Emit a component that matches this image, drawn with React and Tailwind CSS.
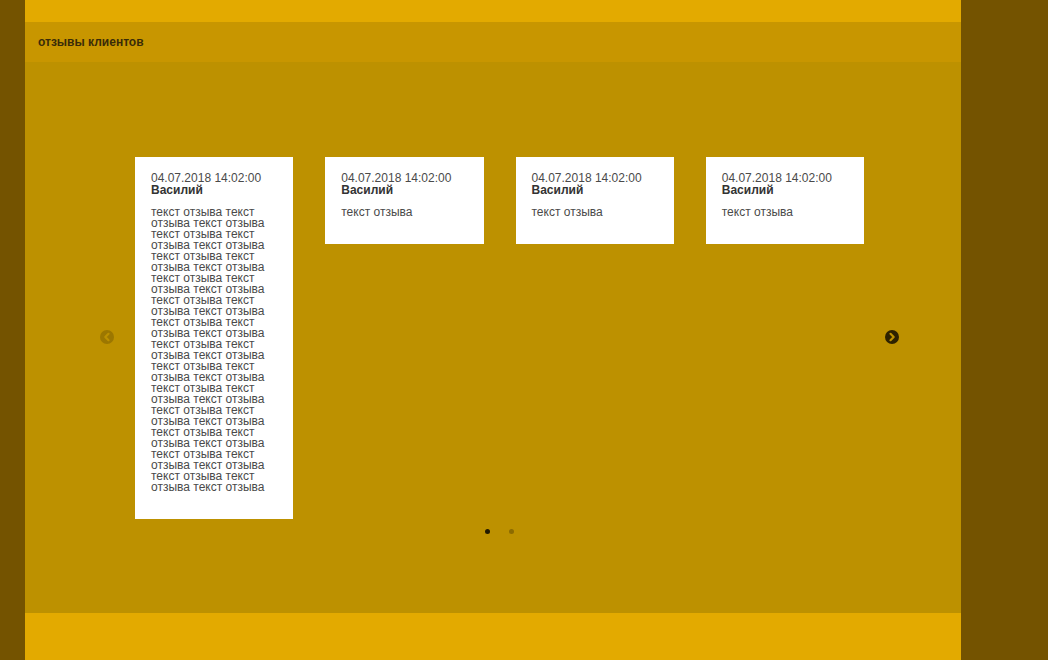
import React from "react";

const font = { fontFamily: '"Liberation Sans", Arial, sans-serif' };

function Card({ reps }) {
  const text = Array(reps).fill("текст отзыва").join(" ");
  return (
    <div className="bg-white px-4 pt-[16px] pb-[26px] text-[12px] leading-[11px] text-[#4a4a4a]">
      <div>04.07.2018 14:02:00</div>
      <div className="mt-[1px] font-bold text-[#333]">Василий</div>
      <div className="mt-[11px]">{text}</div>
    </div>
  );
}

function CircleChevron({ dir }) {
  return (
    <svg width="14" height="14" viewBox="0 0 14 14">
      <circle cx="7" cy="7" r="7" fill="currentColor" />
      {dir === "right" ? (
        <path d="M5.5 3.8 L8.7 7 L5.5 10.2" fill="none" stroke="#bd9100" strokeWidth="2.2" strokeLinecap="round" strokeLinejoin="round" />
      ) : (
        <path d="M8.5 3.8 L5.3 7 L8.5 10.2" fill="none" stroke="#bd9100" strokeWidth="2.2" strokeLinecap="round" strokeLinejoin="round" />
      )}
    </svg>
  );
}

export default function App() {
  return (
    <div className="flex h-[660px] w-[1048px] bg-[#745300]" style={font}>
      <div className="ml-[25px] flex w-[936px] flex-col">
        <div className="h-[22px] bg-[#e3aa00]" />
        <div className="flex h-[40px] items-center bg-[#c89600] pl-[13px] text-[12px] font-bold text-[#3a2c08]">
          отзывы клиентов
        </div>
        <div className="relative h-[551px] bg-[#bd9100]">
          <div className="absolute left-[75px] top-[268px] text-[#9c7700]">
            <CircleChevron dir="left" />
          </div>
          <div className="absolute left-[860px] top-[268px] text-[#2e2200]">
            <CircleChevron dir="right" />
          </div>
          <div className="ml-[110px] pt-[95px]">
            <div className="grid w-[729px] grid-cols-4 items-start gap-[32px]">
              <Card reps={39} />
              <Card reps={1} />
              <Card reps={1} />
              <Card reps={1} />
            </div>
            <div className="mt-[10px] flex w-[729px] justify-center gap-[19px]">
              <div className="h-[5px] w-[5px] rounded-full bg-[#221a00]" />
              <div className="h-[5px] w-[5px] rounded-full bg-[#8c6b00]" />
            </div>
          </div>
        </div>
        <div className="flex-1 bg-[#e3aa00]" />
      </div>
    </div>
  );
}
